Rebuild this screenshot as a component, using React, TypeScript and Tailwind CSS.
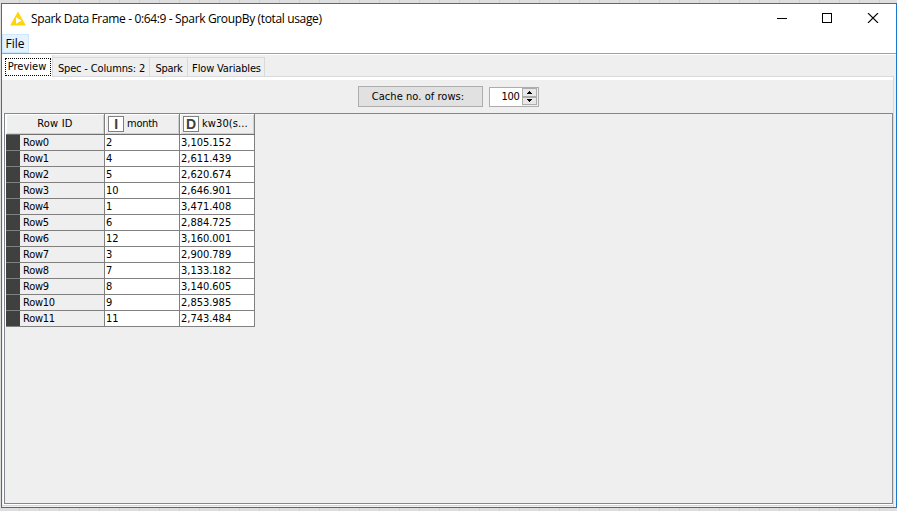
import React from "react";

const rows: [string, string, string][] = [
  ["Row0", "2", "3,105.152"],
  ["Row1", "4", "2,611.439"],
  ["Row2", "5", "2,620.674"],
  ["Row3", "10", "2,646.901"],
  ["Row4", "1", "3,471.408"],
  ["Row5", "6", "2,884.725"],
  ["Row6", "12", "3,160.001"],
  ["Row7", "3", "2,900.789"],
  ["Row8", "7", "3,133.182"],
  ["Row9", "8", "3,140.605"],
  ["Row10", "9", "2,853.985"],
  ["Row11", "11", "2,743.484"],
];

function TitleBar() {
  return (
    <header className="flex h-[30px] shrink-0 items-center font-['Open_Sans',sans-serif] text-[12px] text-black">
      <svg className="ml-2 h-4 w-4 shrink-0" viewBox="0 0 16 16">
        <path d="M8 0.5 L15.9 14.5 H0.1 Z" fill="#fdd60a" />
        <path d="M6 6.2 L11.6 9.6 L6 12.8 Z" fill="#fff" />
      </svg>
      <span className="ml-[5px] whitespace-nowrap tracking-[-0.35px]">
        Spark Data Frame - 0:64:9 - Spark GroupBy (total usage)
      </span>
      <svg className="mb-[2px] ml-auto mr-[17px] h-[10px] w-[102px] shrink-0" viewBox="0 0 102 10" fill="none" stroke="#000" shapeRendering="crispEdges">
        <path d="M0 5.5 H10" />
        <path d="M45.5 .5 H54.5 V9.5 H45.5 Z" />
        <path d="M91 0 L101 10 M101 0 L91 10" shapeRendering="auto" strokeWidth="1.1" />
      </svg>
    </header>
  );
}

function Tabs() {
  const tab = "flex h-[19px] items-center justify-center border-t border-r border-[#d9d9d9] whitespace-nowrap pt-[4px] pl-px";
  return (
    <nav className="flex h-[22px] shrink-0 items-end tracking-[-0.25px]">
      <div className="flex h-[22px] w-[51px] justify-center border-r border-[#d9d9d9] bg-white pl-px pt-[3px]">
        <span className="flex h-[18px] w-[46px] items-center justify-center border border-dotted border-black pr-px pt-px tracking-[0px]">
          Preview
        </span>
      </div>
      <div className="flex h-[20px] grow border-b border-[#d9d9d9]">
        <div className={`${tab} w-[97px] tracking-[-0.15px]`}>Spec - Columns: 2</div>
        <div className={`${tab} w-[38px]`}>Spark</div>
        <div className={`${tab} w-[77px] tracking-[-0.15px]`}>Flow Variables</div>
      </div>
      <div className="w-[2px]" />
    </nav>
  );
}

function TypeIcon({ letter }: { letter: string }) {
  return (
    <span className="ml-[3px] mr-[3px] mt-[2px] flex h-4 w-4 shrink-0 items-center justify-center border border-[#808080] bg-white font-['Liberation_Sans',Arial,sans-serif] text-[14px] font-bold leading-none text-[#404040]">
      {letter}
    </span>
  );
}

function DataTable() {
  const head = "flex h-[20px] items-center border-r border-[#808080] shadow-[inset_1px_1px_0_#fff,inset_-1px_-1px_0_#d0d0d0] whitespace-nowrap pb-[2px]";
  return (
    <div className="w-[250px] border-l border-white leading-[15px] tracking-[-0.1px]">
      <div className="flex border-b border-[#707070]">
        <div className={`${head} w-[99px] justify-center tracking-[0.2px]`}>Row ID</div>
        <div className={`${head} w-[75px] tracking-[-0.25px]`}><TypeIcon letter="I" />month</div>
        <div className={`${head} w-[75px] tracking-[0.1px]`}><TypeIcon letter="D" />kw30(s...</div>
      </div>
      {rows.map(([id, month, value]) => (
        <div key={id} className="flex h-4 border-b border-[#808080] bg-white">
          <div className="flex w-[99px] border-r border-[#808080] bg-[#efefef] tracking-[-0.25px]">
            <i className="mr-[3px] w-[14px] bg-[#404040]" />{id}
          </div>
          <div className="w-[75px] border-r border-[#808080] pl-px">{month}</div>
          <div className="w-[75px] border-r border-[#808080] pl-px tracking-[-0.02px]">{value}</div>
        </div>
      ))}
    </div>
  );
}

export default function App() {
  return (
    <div className="h-[511px] w-[897px] overflow-hidden bg-[#dedede] bg-[repeating-linear-gradient(90deg,transparent_0px,transparent_19px,#d0d0d0_19px,#d0d0d0_20px)] pl-px pt-[3px] font-['DejaVu_Sans_Condensed','DejaVu_Sans',sans-serif] text-[11px] tracking-[-0.3px] text-black">
      <main className="flex h-[505px] w-[896px] flex-col border border-[#1979ca] bg-[#efefef]">
        <div className="h-[49px] shrink-0 bg-white">
          <TitleBar />
          <div className="flex h-[19px] w-[27px] items-center justify-center border border-[#cce8ff] bg-[#e5f3ff] pr-px font-['Open_Sans',sans-serif] text-[12px] tracking-[0px]">File</div>
        </div>
        <div className="h-[2px] shrink-0 border-b border-white bg-[#a0a0a0]" />
        <Tabs />
        <div className="mr-[2px] flex min-h-0 grow flex-col border-r border-[#d9d9d9]">
          <div className="h-[3px] shrink-0 bg-white" />
          <div className="flex h-[33px] shrink-0 items-center justify-center gap-[6px] pl-[1px]">
            <div className="flex h-[21px] w-[125px] items-center justify-center border border-[#adadad] bg-[#e1e1e1] pr-1 pt-[2px] tracking-[0.05px]">Cache no. of rows:</div>
            <div className="flex h-[20px] w-[50px] border border-[#adadad] bg-white">
              <span className="flex grow items-center justify-end pr-[2px] pt-[2px]">100</span>
              <svg className="h-[18px] w-[16px]" viewBox="0 0 16 18" shapeRendering="crispEdges">
                <path d="M0 0H16V18H0Z" fill="#efefef" />
                <path d="M.5 .5H14.5V8.5H.5ZM.5 9.5H14.5V16.5H.5Z" fill="#e8e8e8" stroke="#adadad" />
                <path d="M7 3H8V4H9V5H10V6H5V5H6V4H7ZM5 11H10V12H9V13H8V14H7V13H6V12H5Z" fill="#000" />
              </svg>
            </div>
          </div>
          <div className="ml-px flex min-h-0 grow border-b border-l border-white">
            <div className="grow border border-[#828790]">
              <DataTable />
            </div>
          </div>
          <div className="mb-px h-[1px] shrink-0 bg-[#d9d9d9]" />
        </div>
      </main>
    </div>
  );
}
